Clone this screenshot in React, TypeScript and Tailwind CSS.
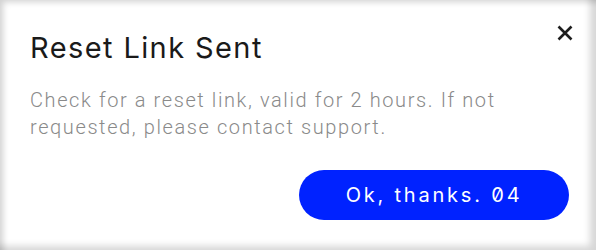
export default function App() {
  return (
    <div className="relative h-[250px] w-[596px] overflow-hidden bg-white shadow-[inset_6px_5px_6px_-3px_rgba(0,0,0,0.18),inset_-9px_-7px_7px_-3px_rgba(0,0,0,0.16)]">
      {/* Close button */}
      <button type="button" className="absolute left-[556px] top-[24px] grid h-[18px] w-[18px] place-items-center text-[#1e1e1e]">
        <svg width="16" height="16" viewBox="0 0 16 16" fill="none" stroke="currentColor" strokeWidth="2.6" strokeLinecap="butt">
          <path d="M1.5 1.5 L14.5 14.5 M14.5 1.5 L1.5 14.5" />
        </svg>
      </button>

      <div className="flex flex-col pl-[30px] pr-[27px] pt-[33px]" style={{ fontFamily: 'Inter, sans-serif' }}>
        <h2 className="text-[29px] leading-[29px] font-normal tracking-[1.4px] text-[#1a1a1a]">Reset Link Sent</h2>
        <p
          className="mt-[25px] w-[540px] text-[20px] leading-[27px] font-light tracking-[1.6px] text-[#8a8a8a]"
          style={{ fontFamily: 'Roboto, sans-serif' }}
        >
          Check for a reset link, valid for 2 hours. If not requested, please contact support.
        </p>
        <div className="mt-[29px] flex justify-end">
          <button
            type="button"
            className="h-[50px] w-[270px] rounded-full bg-[#0022ff] text-[20px] font-normal tracking-[2.8px] text-white slashed-zero"
          >
            Ok, thanks. 04
          </button>
        </div>
      </div>
    </div>
  );
}
